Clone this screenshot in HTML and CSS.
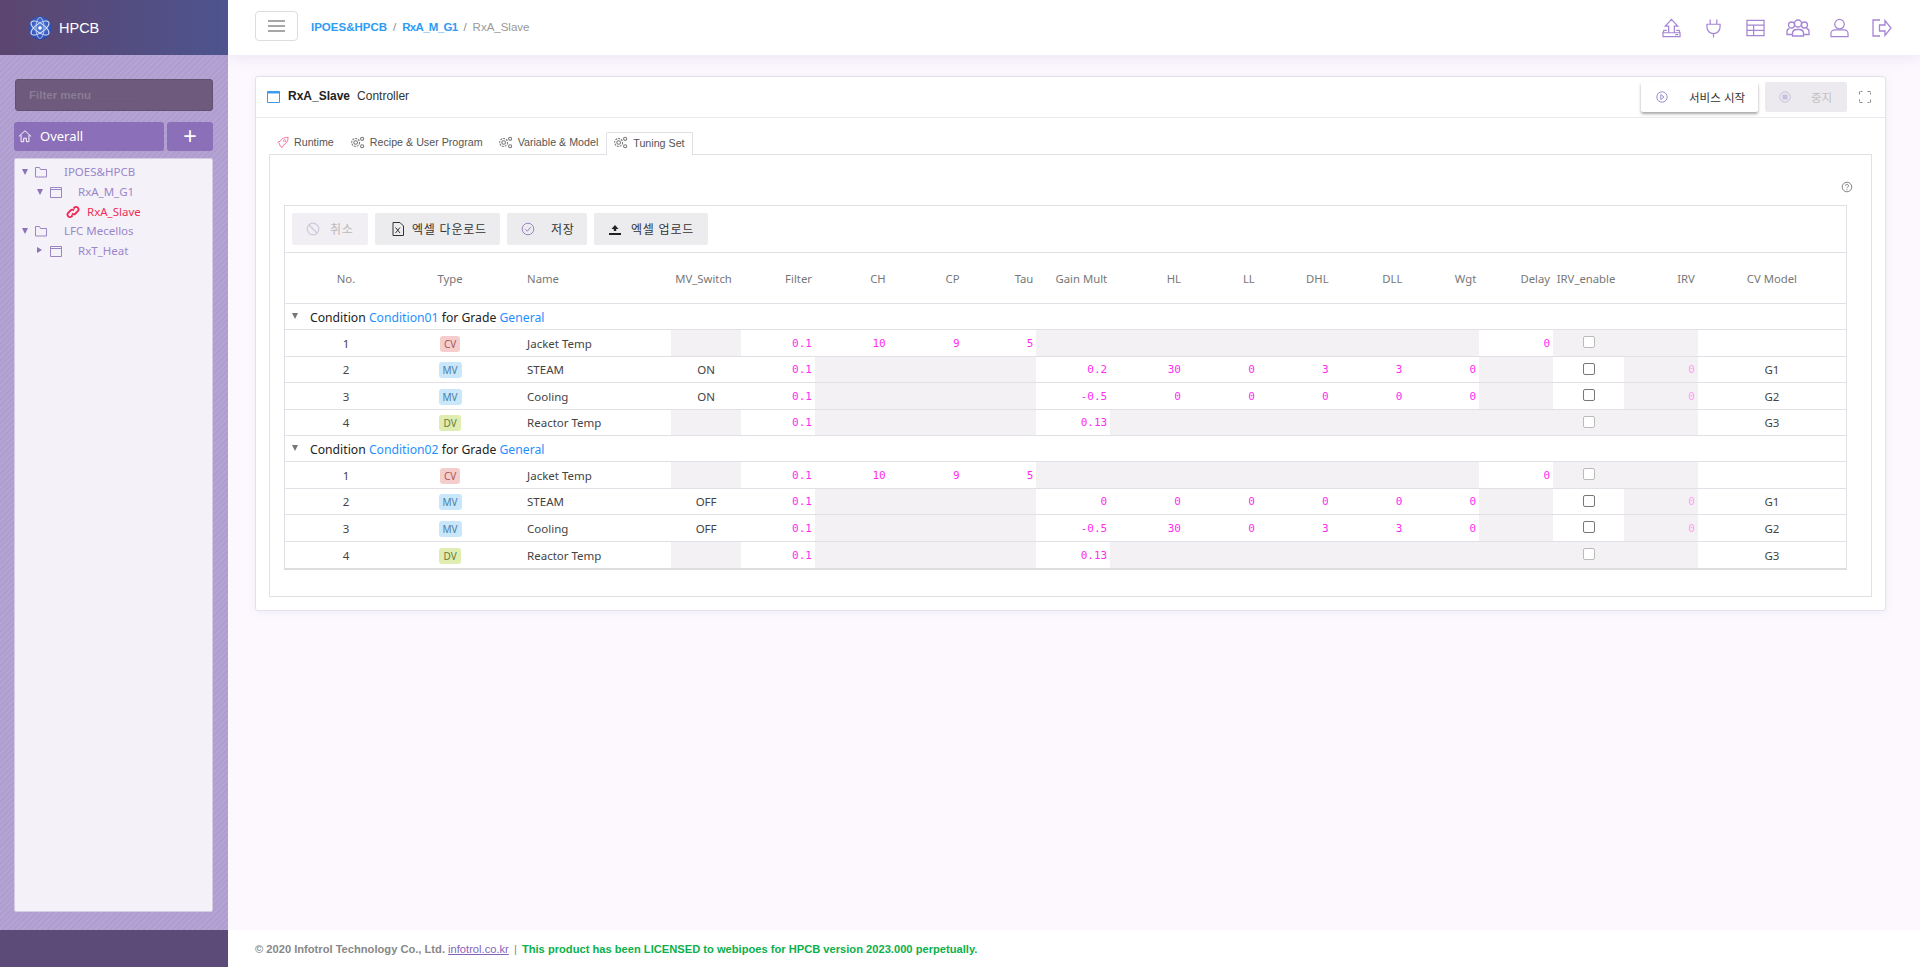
FILE: index.html
```html
<!DOCTYPE html>
<html lang="ko">
<head>
<meta charset="utf-8">
<title>HPCB</title>
<link rel="stylesheet" href="styles.css">
</head>
<body>
<div class="app">
  <aside class="sidebar">
    <div class="brand">
      <svg class="logo" viewBox="0 0 24 24"><defs><radialGradient id="lg" cx="50%" cy="45%" r="60%"><stop offset="0" stop-color="#5c86e0"/><stop offset="1" stop-color="#2443a8"/></radialGradient></defs><circle cx="12" cy="12" r="11.500" fill="url(#lg)"/><ellipse cx="12" cy="12" rx="10.500" ry="4.500" fill="none" stroke="#dbe6fb" stroke-width="1" transform="rotate(35 12 12)"/><ellipse cx="12" cy="12" rx="10.500" ry="4.500" fill="none" stroke="#dbe6fb" stroke-width="1" transform="rotate(-35 12 12)"/><ellipse cx="12" cy="12" rx="10.500" ry="4" fill="none" stroke="#c4d5f7" stroke-width=".8" transform="rotate(90 12 12)"/><circle cx="12" cy="12" r="1.800" fill="#fff"/></svg>
      <span class="brand-name">HPCB</span>
    </div>
    <div class="side-body">
      <div class="filter">Filter menu <span class="dots">..............</span></div>
      <div class="overall-row">
        <div class="overall">
          <svg class="ic-home" viewBox="0 0 16 16"><path d="M1 8.500 8 2l7 6.500M3.500 7v7.500h3v-4h3v4h3V7" fill="none" stroke="#fff" stroke-width="1.100"/></svg>
          <span>Overall</span>
        </div>
        <div class="plus">+</div>
      </div>
      <div class="tree">
        <div class="node lv0"><i class="tri down"></i><svg class="ic" viewBox="0 0 14 14"><path d="M1.500 12V2.500h4l1 2h6V12z" fill="none" stroke="#9a86c2"/></svg><span class="lbl l0">IPOES&amp;HPCB</span></div>
        <div class="node lv1"><i class="tri down"></i><svg class="ic" viewBox="0 0 14 14"><path d="M1.500 2.500h11v10h-11zM1.500 4.500h11" fill="none" stroke="#9a86c2"/></svg><span class="lbl l1">RxA_M_G1</span></div>
        <div class="node lv2 active"><svg class="ic link" viewBox="0 0 14 14"><path d="M6 8.500a2.500 2.500 0 0 0 3.500 0l2.500-2.500a2.500 2.500 0 0 0-3.500-3.500L7.500 3.500M8 5.500a2.500 2.500 0 0 0-3.500 0L2 8a2.500 2.500 0 0 0 3.500 3.500l1-1" fill="none" stroke="#f0264f" stroke-width="1.800"/></svg><span class="lbl l2">RxA_Slave</span></div>
        <div class="node lv0"><i class="tri down"></i><svg class="ic" viewBox="0 0 14 14"><path d="M1.500 12V2.500h4l1 2h6V12z" fill="none" stroke="#9a86c2"/></svg><span class="lbl l0">LFC Mecellos</span></div>
        <div class="node lv1"><i class="tri right"></i><svg class="ic" viewBox="0 0 14 14"><path d="M1.500 2.500h11v10h-11zM1.500 4.500h11" fill="none" stroke="#9a86c2"/></svg><span class="lbl l1">RxT_Heat</span></div>
      </div>
    </div>
    <div class="side-foot"></div>
  </aside>

  <div class="main">
    <header class="topbar">
      <button class="burger"><span></span><span></span><span></span></button>
      <nav class="crumbs"><a>IPOES&amp;HPCB</a><em>/</em><a class="tight">RxA_M_G1</a><em>/</em><span>RxA_Slave</span></nav>
      <div class="top-icons">
        <svg class="ti i-up" viewBox="0 0 20 20"><path d="M10 1 3.500 8H7v7h6V8h3.500zM5 12.500H2L1 15v4h18v-4l-1-2.500h-3M1 15h18M14 17h3"/></svg>
        <svg class="ti i-plug" viewBox="0 0 16 20"><path d="M4.500 1v5M11.500 1v5M1 6h14v3a7 7 0 0 1-14 0zM8 16v4"/></svg>
        <svg class="ti i-tab" viewBox="0 0 20 18"><path d="M1 1h18v16H1zM1 6h18M1 11.500h18M8 6v11"/></svg>
        <svg class="ti i-users" viewBox="0 0 24 18"><circle cx="12" cy="4.500" r="3.500"/><circle cx="5.500" cy="6" r="3"/><circle cx="18.500" cy="6" r="3"/><path d="M6.500 17v-3.500a4 4 0 0 1 4-3h3a4 4 0 0 1 4 3V17zM6.500 15.500H1v-3a3 3 0 0 1 2.500-3M17.500 15.500H23v-3a3 3 0 0 0-2.500-3"/></svg>
        <svg class="ti i-user" viewBox="0 0 20 20"><circle cx="10" cy="6" r="5"/><path d="M1 19v-3a4 4 0 0 1 4-4h10a4 4 0 0 1 4 4v3z"/></svg>
        <svg class="ti i-out" viewBox="0 0 20 18"><path d="M8 1H1v16h7M7.500 6H13V1.500l6 7.500-6 7.500V12H7.500z"/></svg>
      </div>
    </header>

    <div class="content">
      <section class="card">
        <div class="card-head">
          <svg class="win" viewBox="0 0 13 13"><path d="M.5 1.500h12v11H.5z" fill="none" stroke="#3c9bf0"/><path d="M.5 1h12v2.500H.5z" fill="#3c9bf0"/></svg>
          <strong>RxA_Slave</strong><span class="ctl">Controller</span>
          <div class="head-actions">
            <button class="btn-start"><svg class="bi" viewBox="0 0 12 12"><circle cx="6" cy="6" r="5.200"/><path d="M4.800 3.500 8 6l-3.200 2.500z"/></svg><span>서비스 시작</span></button>
            <button class="btn-stop"><svg class="bi" viewBox="0 0 12 12"><circle cx="6" cy="6" r="5.200"/><rect x="4" y="4" width="4" height="4" fill="#c8bfdc"/></svg><span>중지</span></button>
            <svg class="full" viewBox="0 0 12 12"><path d="M.5 3.500v-3h3M8.500.500h3v3M11.500 8.500v3h-3M3.500 11.500h-3v-3"/></svg>
          </div>
        </div>
        <div class="card-body">
          <div class="tabs">
            <div class="tab rocket"><svg class="tic" viewBox="0 0 14 14"><path d="M13 1C9 .5 5.500 2.500 3.800 5.500L1 6.500l2 2 .5 2.500 2.500 2 1.500-3C10.500 9 13 5.500 13 1z" fill="none" stroke="#f4729a" stroke-width="1.100"/><circle cx="9" cy="5" r="1.300" fill="none" stroke="#f4729a"/></svg>Runtime</div>
            <div class="tab"><svg class="tic" viewBox="0 0 16 14"><g fill="none" stroke="#777" stroke-width="1.100"><circle cx="6" cy="7" r="2"/><circle cx="6" cy="7" r="4.300" stroke-dasharray="2.200 1"/><circle cx="13" cy="3" r="1.700"/><circle cx="13" cy="11" r="1.700"/></g></svg>Recipe &amp; User Program</div>
            <div class="tab"><svg class="tic" viewBox="0 0 16 14"><g fill="none" stroke="#777" stroke-width="1.100"><circle cx="6" cy="7" r="2"/><circle cx="6" cy="7" r="4.300" stroke-dasharray="2.200 1"/><circle cx="13" cy="3" r="1.700"/><circle cx="13" cy="11" r="1.700"/></g></svg>Variable &amp; Model</div>
            <div class="tab on"><svg class="tic" viewBox="0 0 16 14"><g fill="none" stroke="#777" stroke-width="1.100"><circle cx="6" cy="7" r="2"/><circle cx="6" cy="7" r="4.300" stroke-dasharray="2.200 1"/><circle cx="13" cy="3" r="1.700"/><circle cx="13" cy="11" r="1.700"/></g></svg>Tuning Set</div>
          </div>
          <div class="panel">
            <div class="help-row"><svg class="help" viewBox="0 0 12 12"><circle cx="6" cy="6" r="4.800"/><path d="M4.500 4.800a1.500 1.500 0 1 1 2.200 1.300c-.5.300-.7.500-.7 1.100M6 8.200v1"/></svg></div>
            <div class="grid-wrap">
              <div class="toolbar">
                <button class="tb off w-cancel"><svg class="tbi" viewBox="0 0 14 14"><circle cx="7" cy="7" r="5.800" fill="none" stroke="#cfc8dd" stroke-width="1.200"/><path d="M3 3l8 8" stroke="#cfc8dd" stroke-width="1.200"/></svg><span>취소</span></button>
                <button class="tb w-down"><svg class="tbi" viewBox="0 0 12 14"><path d="M1 .5h7l3.500 3.500v9.500H1z" fill="none" stroke="#333"/><path d="M3.500 5.500l4.500 5.500M8 5.500l-4.500 5.500" stroke="#333"/></svg><span>엑셀 다운로드</span></button>
                <button class="tb w-save"><svg class="tbi" viewBox="0 0 14 14"><circle cx="7" cy="7" r="5.800" fill="none" stroke="#9a86c2"/><path d="M4.300 7.200 6.300 9.200 9.800 5" fill="none" stroke="#9a86c2"/></svg><span>저장</span></button>
                <button class="tb w-up"><svg class="tbi" viewBox="0 0 14 14"><path d="M7 3 3.500 7h2.300v2h2.400V7h2.300z" fill="#222"/><path d="M1 12h12" stroke="#222" stroke-width="2"/></svg><span>엑셀 업로드</span></button>
              </div>
              <table class="grid">
                <colgroup>
                  <col class="c-no"><col class="c-type"><col class="c-name"><col class="c-sw"><col class="c-n"><col class="c-n"><col class="c-n"><col class="c-n"><col class="c-n"><col class="c-n"><col class="c-n"><col class="c-n"><col class="c-n"><col class="c-n"><col class="c-n"><col class="c-en"><col class="c-n"><col class="c-m">
                </colgroup>
                <thead>
                  <tr><th>No.</th><th>Type</th><th class="tl">Name</th><th class="sw">MV_Switch</th><th class="tr">Filter</th><th class="tr">CH</th><th class="tr">CP</th><th class="tr">Tau</th><th class="tr">Gain Mult</th><th class="tr">HL</th><th class="tr">LL</th><th class="tr">DHL</th><th class="tr">DLL</th><th class="tr">Wgt</th><th class="tr">Delay</th><th class="en">IRV_enable</th><th class="tr">IRV</th><th>CV Model</th></tr>
                </thead>
                <tbody>
                  <tr class="grp"><td colspan="18"><i class="tri gdown"></i>Condition <b>Condition01</b> for Grade <b>General</b></td></tr>
                  <tr><td>1</td><td><span class="tag cv">CV</span></td><td class="tl">Jacket Temp</td><td class="x"></td><td class="v">0.1</td><td class="v">10</td><td class="v">9</td><td class="v">5</td><td class="x"></td><td class="x"></td><td class="x"></td><td class="x"></td><td class="x"></td><td class="x"></td><td class="v">0</td><td class="x"><i class="cb dis"></i></td><td class="x"></td><td></td></tr>
                  <tr><td>2</td><td><span class="tag mv">MV</span></td><td class="tl">STEAM</td><td>ON</td><td class="v">0.1</td><td class="x"></td><td class="x"></td><td class="x"></td><td class="v">0.2</td><td class="v">30</td><td class="v">0</td><td class="v">3</td><td class="v">3</td><td class="v">0</td><td class="x"></td><td><i class="cb"></i></td><td class="x v faint">0</td><td>G1</td></tr>
                  <tr><td>3</td><td><span class="tag mv">MV</span></td><td class="tl">Cooling</td><td>ON</td><td class="v">0.1</td><td class="x"></td><td class="x"></td><td class="x"></td><td class="v">-0.5</td><td class="v">0</td><td class="v">0</td><td class="v">0</td><td class="v">0</td><td class="v">0</td><td class="x"></td><td><i class="cb"></i></td><td class="x v faint">0</td><td>G2</td></tr>
                  <tr><td>4</td><td><span class="tag dv">DV</span></td><td class="tl">Reactor Temp</td><td class="x"></td><td class="v">0.1</td><td class="x"></td><td class="x"></td><td class="x"></td><td class="v">0.13</td><td class="x"></td><td class="x"></td><td class="x"></td><td class="x"></td><td class="x"></td><td class="x"></td><td class="x"><i class="cb dis"></i></td><td class="x"></td><td>G3</td></tr>
                  <tr class="grp"><td colspan="18"><i class="tri gdown"></i>Condition <b>Condition02</b> for Grade <b>General</b></td></tr>
                  <tr><td>1</td><td><span class="tag cv">CV</span></td><td class="tl">Jacket Temp</td><td class="x"></td><td class="v">0.1</td><td class="v">10</td><td class="v">9</td><td class="v">5</td><td class="x"></td><td class="x"></td><td class="x"></td><td class="x"></td><td class="x"></td><td class="x"></td><td class="v">0</td><td class="x"><i class="cb dis"></i></td><td class="x"></td><td></td></tr>
                  <tr><td>2</td><td><span class="tag mv">MV</span></td><td class="tl">STEAM</td><td>OFF</td><td class="v">0.1</td><td class="x"></td><td class="x"></td><td class="x"></td><td class="v">0</td><td class="v">0</td><td class="v">0</td><td class="v">0</td><td class="v">0</td><td class="v">0</td><td class="x"></td><td><i class="cb"></i></td><td class="x v faint">0</td><td>G1</td></tr>
                  <tr><td>3</td><td><span class="tag mv">MV</span></td><td class="tl">Cooling</td><td>OFF</td><td class="v">0.1</td><td class="x"></td><td class="x"></td><td class="x"></td><td class="v">-0.5</td><td class="v">30</td><td class="v">0</td><td class="v">3</td><td class="v">3</td><td class="v">0</td><td class="x"></td><td><i class="cb"></i></td><td class="x v faint">0</td><td>G2</td></tr>
                  <tr><td>4</td><td><span class="tag dv">DV</span></td><td class="tl">Reactor Temp</td><td class="x"></td><td class="v">0.1</td><td class="x"></td><td class="x"></td><td class="x"></td><td class="v">0.13</td><td class="x"></td><td class="x"></td><td class="x"></td><td class="x"></td><td class="x"></td><td class="x"></td><td class="x"><i class="cb dis"></i></td><td class="x"></td><td>G3</td></tr>
                </tbody>
              </table>
            </div>
          </div>
        </div>
      </section>
    </div>

    <footer class="foot">
      <span class="c">© 2020 Infotrol Technology Co., Ltd.</span> <a>infotrol.co.kr</a> <span class="sep">|</span> <span class="lic">This product has been LICENSED to webipoes for HPCB version 2023.000 perpetually.</span>
    </footer>
  </div>
</div>
</body>
</html>
```
FILE: styles.css
```css
* { box-sizing: border-box; }
html, body { margin: 0; height: 100%; }
body { font-family: "Noto Sans", "Noto Sans CJK KR", sans-serif; font-size: 12px; color: #333; overflow: hidden; }
button { font-family: inherit; }
.app { display: flex; height: 967px; }

.sidebar { width: 228px; flex: none; display: flex; flex-direction: column; background: repeating-linear-gradient(135deg, #b5a3d3 0 2px, #b09dd0 2px 4px); }
.brand { height: 55px; flex: none; display: flex; align-items: center; padding-left: 28px; background: linear-gradient(90deg, #5c456f, #4d548f); }
.logo { width: 24px; height: 24px; }
.brand-name { margin-left: 7px; color: #fff; font-family: "Liberation Sans", sans-serif; font-size: 14.500px; }
.side-body { flex: 1; display: flex; flex-direction: column; padding: 24px 15px 18px 14px; min-height: 0; }
.filter { height: 32px; margin-left: 1px; background: #6d5a7c; border: 1px solid #62506f; border-radius: 3px; color: #8a7d95; font-family: "Liberation Sans", sans-serif; font-size: 11.500px; font-weight: 700; line-height: 30px; padding-left: 13px; white-space: nowrap; overflow: hidden; }
.dots { color: #77657f; font-weight: 400; }
.overall-row { display: flex; gap: 3px; margin-top: 11px; height: 29px; }
.overall { width: 150px; display: flex; align-items: center; background: #8b6fb8; border-radius: 3px; color: #fff; font-size: 13px; padding: 0 0 2px 4px; }
.ic-home { width: 14px; height: 14px; margin-right: 8px; }
.plus { flex: 1; background: #8b6fb8; border-radius: 3px; color: #fff; font-family: "Liberation Sans", sans-serif; font-size: 23px; font-weight: 400; line-height: 28px; text-align: center; }
.tree { flex: 1; margin-top: 7px; background: #f4f1f9; border: 1px solid #d5cbe5; border-radius: 2px; padding-top: 3px; }
.node { height: 19.800px; display: flex; align-items: center; position: relative; }
.lbl { font-size: 11.500px; position: absolute; top: 2px; }
.ic { width: 14px; height: 14px; position: absolute; top: 3px; }
.tri { position: absolute; width: 0; height: 0; border-style: solid; }
.tri.down { top: 7px; border-width: 6px 3.500px 0; border-color: #8b73b8 transparent transparent; }
.tri.right { top: 6px; border-width: 3.500px 0 3.500px 5px; border-color: transparent transparent transparent #8b73b8; }
.lv0 .tri { left: 7px; } .lv0 .ic { left: 19px; } .l0 { left: 49px; color: #9a86c9; }
.lv1 .tri { left: 22px; } .lv1 .ic { left: 34px; } .l1 { left: 63px; color: #9a86c9; }
.lv2 .ic.link { left: 51px; } .l2 { left: 72px; color: #ef2f57; }

.side-foot { height: 37px; flex: none; background: #5c4b78; }

.main { flex: 1; min-width: 0; display: flex; flex-direction: column; background: #fcf8fe; }
.topbar { height: 55px; flex: none; background: #fff; display: flex; align-items: center; padding-left: 27px; box-shadow: 0 3px 14px rgba(120,100,160,.12); position: relative; }
.burger { width: 43px; height: 30px; margin-top: -4px; background: #fff; border: 1px solid #ddd; border-radius: 4px; display: flex; flex-direction: column; align-items: center; justify-content: center; gap: 3px; padding: 0; }
.burger span { width: 17px; height: 2px; background: #a7a7a7; }
.crumbs { margin-left: 13px; margin-top: -2px; font-family: "Liberation Sans", sans-serif; font-size: 11.500px; color: #999; display: flex; }
.crumbs a { color: #2d9cf4; font-weight: 700; }
.crumbs a.tight { letter-spacing: -.7px; }
.crumbs em { font-style: normal; margin: 0 6px; color: #8a8a8a; }
.top-icons { margin-left: auto; margin-right: 28px; display: flex; align-items: center; }
.ti { fill: none; stroke: #a585d4; stroke-width: 1.300; height: 20px; flex: none; }
.i-up { width: 19px; }
.i-plug { width: 15px; margin-left: 25px; }
.i-tab { width: 19px; margin-left: 25px; }
.i-users { width: 24px; margin-left: 21px; }
.i-user { width: 19px; margin-left: 20px; }
.i-out { width: 20px; margin-left: 23px; }

.content { flex: 1; padding: 21px 34px 0 27px; min-height: 0; }
.card { height: 535px; background: #fff; border: 1px solid #e4e2e8; border-radius: 3px; display: flex; flex-direction: column; box-shadow: 0 1px 8px rgba(120,100,160,.08); }
.card-head { height: 41px; flex: none; border-bottom: 1px solid #eae8ee; display: flex; align-items: center; padding: 0 0 2px 11px; position: relative; font-family: "Liberation Sans", sans-serif; font-size: 12px; }
.win { width: 13px; height: 13px; margin-right: 8px; }
.card-head strong { font-size: 12px; font-weight: 700; color: #222; }
.ctl { margin-left: 7px; color: #333; }
.head-actions { margin-left: auto; display: flex; align-items: center; margin-right: 14px; padding-top: 2px; font-family: "Noto Sans CJK KR", sans-serif; }
.bi { width: 12px; height: 12px; fill: none; stroke: #9a8fd0; }
.btn-start { width: 117px; height: 30px; background: #fff; border: 0; border-radius: 2px; box-shadow: 0 2px 3px rgba(0,0,0,.35); font-size: 11.500px; color: #333; display: flex; align-items: center; padding: 0 0 0 15px; }
.btn-start span { margin-left: 21px; }
.btn-stop { width: 82px; height: 30px; margin-left: 7px; background: #eceaef; border: 0; border-radius: 2px; font-size: 11.500px; color: #c0c0c0; display: flex; align-items: center; padding: 0 0 0 14px; }
.btn-stop .bi { stroke: #c8bfdc; }
.btn-stop span { margin-left: 20px; }
.full { width: 12px; height: 12px; margin-left: 12px; fill: none; stroke: #888; stroke-dasharray: 3 1; }

.card-body { flex: 1; display: flex; flex-direction: column; padding: 14px 13px 13px 13px; }
.tabs { display: flex; height: 22px; flex: none; position: relative; z-index: 1; padding-left: 8px; }
.tab { display: flex; align-items: center; height: 20px; font-family: "Liberation Sans", sans-serif; font-size: 10.700px; color: #555; margin-right: 15px; white-space: nowrap; }
.tic { width: 15px; height: 13px; margin-right: 5px; flex: none; }
.rocket { margin-right: 16px; }
.rocket .tic { width: 12px; margin-right: 5px; }
.tab.on { height: 23px; margin: 0 0 -1px -7px; padding: 0 7px 3px 6px; background: #fff; border: 1px solid #e2e0e6; border-bottom: 0; border-radius: 2px 2px 0 0; }
.panel { flex: 1; border: 1px solid #e2e0e6; padding: 0 22px 0 14px; }
.help-row { height: 50px; position: relative; }
.help { position: absolute; right: -4px; top: 26px; width: 12px; height: 12px; fill: none; stroke: #777; stroke-width: .9; }
.grid-wrap { border: 1px solid #e2e0e6; border-bottom: 2px solid #ddd; width: 1563px; }
.toolbar { height: 47px; display: flex; gap: 7px; padding: 7px 0 0 7px; border-bottom: 1px solid #e2e0e6; }
.tb { height: 32px; background: #ecebee; border: 0; border-radius: 2px; font-size: 12px; color: #333; display: flex; align-items: center; justify-content: flex-start; padding: 0; }
.tb span { letter-spacing: .8px; }
.tbi { width: 14px; height: 14px; flex: none; }
.off { background: #f1eff4; color: #bbb; }
.w-cancel { width: 76px; padding-left: 14px; } .w-cancel span { margin-left: 10px; }
.w-down { width: 125px; padding-left: 16px; } .w-down span { margin-left: 7px; }
.w-save { width: 80px; padding-left: 14px; } .w-save span { margin-left: 16px; }
.w-up { width: 114px; padding-left: 14px; } .w-up span { margin-left: 9px; }

.grid { width: 100%; border-collapse: separate; border-spacing: 0; table-layout: fixed; font-size: 11.500px; }
.c-no { width: 122px; } .c-type { width: 86px; } .c-name { width: 178px; } .c-sw { width: 70px; }
.c-n { width: 73.800px; } .c-en { width: 71px; } .c-m { width: 148px; }
.grid th { height: 51px; font-size: 11.300px; font-weight: 400; color: #777; text-align: center; padding: 0 3px; border-bottom: 1px solid #e2e0e6; white-space: nowrap; }
.grid td { height: 26.500px; padding: 1px 3px 0; text-align: center; color: #444; border-bottom: 1px solid #e2e0e6; white-space: nowrap; }
.grid tbody tr:last-child td { border-bottom: 0; }
.grid .tl { text-align: left; padding-left: 34px; }
.grid .tr { text-align: right; }
.grid .sw { padding: 0 5px 0 0; }
.grid .en { padding: 0 5px 0 0; }
.grid td.x { background: #f3f1f4; }
.grid td.v { color: #ff2cf0; text-align: right; font-family: "DejaVu Sans Mono", monospace; font-size: 11px; padding-right: 3px; }
.grid td.faint { color: #ff9ff5; }
.grid .grp td { height: 26px; text-align: left; color: #222; padding: 2px 0 0 25px; position: relative; font-size: 12.200px; }
.grp b { font-weight: 400; color: #1f8fff; }
.tri.gdown { left: 7px; top: 9px; border-width: 6px 3.500px 0; border-color: #777 transparent transparent; }
.tag { display: inline-block; height: 16px; padding: 0 4px; border-radius: 3px; font-size: 10px; line-height: 16px; vertical-align: middle; }
.cv { background: #f6cdcd; color: #a45b5b; }
.mv { background: #c9e7fb; color: #4f7da0; }
.dv { background: #e0edb0; color: #6d7a3a; }
.cb { display: block; width: 12px; height: 12px; margin: -2px auto 0; background: #fff; border: 1px solid #777; border-radius: 2px; }
.cb.dis { border-color: #bbb; }

.foot { height: 37px; flex: none; background: #fff; padding: 13px 0 0 27px; font-family: "Liberation Sans", sans-serif; font-size: 11.150px; font-weight: 700; color: #888; }
.foot a { color: #8564bb; text-decoration: underline; font-weight: 400; }
.sep { margin: 0 2px; font-weight: 400; }
.lic { color: #0cb04a; }
```
